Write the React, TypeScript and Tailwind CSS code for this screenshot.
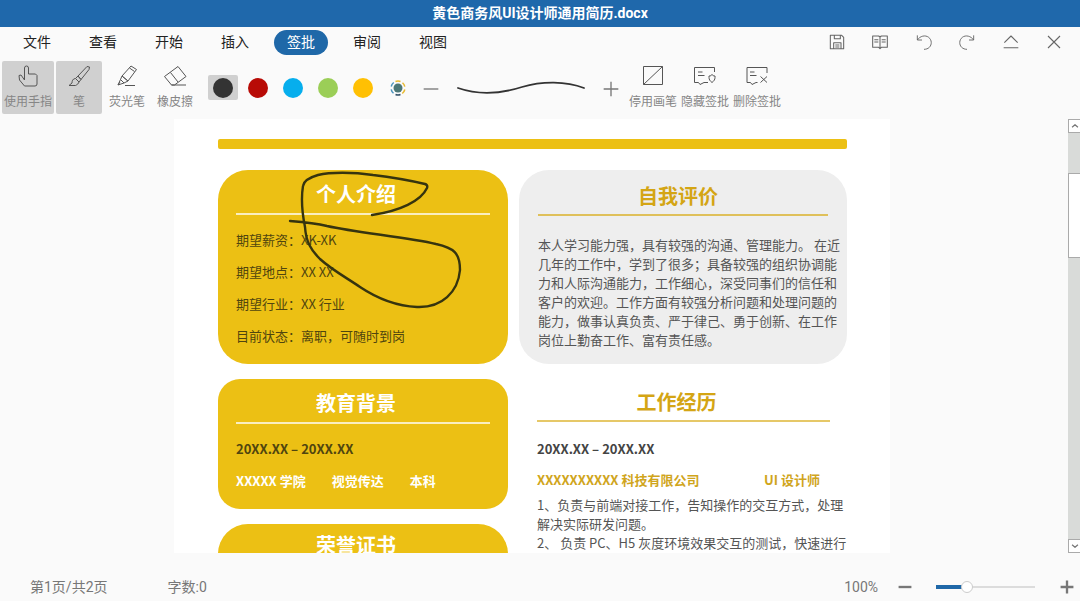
import { ReactNode, useState } from 'react'

const tabs = ['文件', '查看', '开始', '插入', '签批', '审阅', '视图']

const colors = [
  { name: '黑色', className: 'bg-[#333333]' },
  { name: '红色', className: 'bg-[#b80b06]' },
  { name: '蓝色', className: 'bg-[#06aeed]' },
  { name: '绿色', className: 'bg-[#9bce57]' },
  { name: '黄色', className: 'bg-[#ffc003]' },
]

interface IconProps {
  children: ReactNode
  className?: string
}

function Icon({ children, className = 'size-6' }: IconProps) {
  return (
    <svg viewBox="0 0 24 24" fill="none" stroke="currentColor" strokeLinejoin="round" className={className} aria-hidden="true">
      {children}
    </svg>
  )
}

interface ToolProps {
  label: string
  className?: string
  active?: boolean
  children: ReactNode
}

function Tool({ label, className = '', active = false, children }: ToolProps) {
  return (
    <button
      type="button"
      aria-pressed={active}
      className={`flex h-[53px] flex-col items-center gap-1 rounded-xs pt-[3px] text-xs text-[#868686] ${active ? 'bg-[#d0d0d0]' : ''} ${className}`}
    >
      <Icon className="size-6 text-[#555]">{children}</Icon>
      <span className="whitespace-nowrap leading-5">{label}</span>
    </button>
  )
}

function ActionButton({ label, children }: { label: string; children: ReactNode }) {
  return (
    <button type="button" aria-label={label} className="text-[#666]">
      <Icon className="size-4">{children}</Icon>
    </button>
  )
}

function MenuBar() {
  const [current, setCurrent] = useState('签批')

  return (
    <div className="flex h-[30px] items-center justify-between pl-[10px] pr-[18px]">
      <nav className="flex gap-3">
        {tabs.map((tab) => (
          <button
            key={tab}
            type="button"
            onClick={() => setCurrent(tab)}
            className={`h-[25px] rounded-full px-[13px] text-sm leading-none ${tab === current ? 'bg-[#1f68a8] text-white' : 'text-[#222]'}`}
          >
            {tab}
          </button>
        ))}
      </nav>
      <div className="flex w-[233px] justify-between">
        <ActionButton label="保存">
          <path strokeWidth="1.6" d="M2 2h17l3 3v17H2zM8 2v5h9V2M7 22v-9h11v9M9.500 16.500h6M9.500 19.500h6" />
        </ActionButton>
        <ActionButton label="阅读模式">
          <path strokeWidth="1.6" d="M1 3h9l2 1.500L14 3h9v17h-9l-2 2-2-2H1zM12 4v18M3.500 8.500h6M3.500 12h6M14.500 8.500h6M14.500 12h6" />
        </ActionButton>
        <ActionButton label="撤销">
          <path strokeWidth="1.400" d="M2 2v7h7M2 9c4-6 12-8 17-4 5 4 5 11 1 15-2 2-5 3-8 3" />
        </ActionButton>
        <ActionButton label="重做">
          <path strokeWidth="1.400" d="M22 2v7h-7M22 9C18 3 10 1 5 5 0 9 0 16 4 20c2 2 5 3 8 3" />
        </ActionButton>
        <ActionButton label="收起">
          <path strokeWidth="1.600" d="M2 13 12 3l10 10M1 20.500h22" />
        </ActionButton>
        <ActionButton label="关闭">
          <path strokeWidth="1.700" d="m3 3 18 18M21 3 3 21" />
        </ActionButton>
      </div>
    </div>
  )
}

function Toolbar() {
  const [color, setColor] = useState('黑色')

  return (
    <div className="flex h-[62px] items-start pl-[2px] pt-1">
      <Tool label="使用手指" className="w-[52px]" active>
        <path d="M8.500 16V4a2 2 0 0 1 4 0v6h7l1.500 1.500V20a2 2 0 0 1-2 2H8.500L3.500 16 3 11.500l2-.500 3.500 5" />
      </Tool>
      <Tool label="笔" className="ml-[2px] w-[46px]" active>
        <path d="m11 12 9-9.500 2.500.500-.500 2.500-8 10zM11 12l3 3.500-2 2.500-3.500-3.500zM8.500 14.500c-3 0-3.500 3-3.500 4.500L2 21.500h6.500c2-1 3-2 3.500-3.500" />
      </Tool>
      <Tool label="荧光笔" className="ml-[2px] w-[46px]">
        <path d="m7 12 9-10 5.500 3.500L13 17zM14.500 4l5 3.500M7 12l6 5-4 2-3.500-3.500zM5.500 15.500 3 21l6-2M3 21l2-3M10 21.500h10" />
      </Tool>
      <Tool label="橡皮擦" className="ml-[2px] w-[46px]">
        <path d="M1.500 12.500 15 2.500l8 10-11.500 8.500H8.500zM7.500 8.500 15 18M8.500 21H23" />
      </Tool>

      <div className="ml-[10px] flex gap-[5px] pt-[14px]">
        {colors.map((c) => (
          <button
            key={c.name}
            type="button"
            aria-label={c.name}
            onClick={() => setColor(c.name)}
            className={`flex h-[25px] w-[30px] items-center justify-center rounded-xs ${c.name === color ? 'bg-[#d0d0d0]' : ''}`}
          >
            <span className={`size-5 rounded-full ${c.className}`} />
          </button>
        ))}
        <button type="button" aria-label="更多颜色" className="flex h-[26px] w-[30px] items-center justify-center">
          <svg viewBox="0 0 16 16" fill="none" strokeWidth="1.500" className="size-4" aria-hidden="true">
            <circle cx="8" cy="8" r="4.500" fill="#4c7777" />
            <path stroke="#e8b92f" d="M5.500 1.500a7 7 0 0 1 5 0M12.500 2.700a7 7 0 0 1 2.300 4M14.800 9.500a7 7 0 0 1-2.500 4" />
            <path stroke="#35536b" d="M10.500 14.500a7 7 0 0 1-5 0" />
            <path stroke="#4a93bd" d="M3.500 13.300a7 7 0 0 1-2.300-4M1.200 6.500a7 7 0 0 1 2.500-4" />
          </svg>
        </button>
      </div>

      <div className="ml-[10px] flex items-center gap-[17px] pt-[19px] text-[#777]">
        <button type="button" aria-label="减小笔宽">
          <Icon className="size-4">
            <path strokeWidth="2" d="M1 12h22" />
          </Icon>
        </button>
        <svg viewBox="0 0 130 18" fill="none" stroke="#333" strokeLinecap="round" className="h-[18px] w-[130px]" aria-hidden="true">
          <path strokeWidth="1.800" d="M2 8c20 7 42 6 64-1 20-6 44-6 62 1" />
        </svg>
        <button type="button" aria-label="增大笔宽">
          <Icon className="size-4">
            <path strokeWidth="2" d="M1 12h22M12 1v22" />
          </Icon>
        </button>
      </div>

      <div className="ml-[10px] flex gap-1">
        <Tool label="停用画笔" className="w-12">
          <path d="M2.500 2.500h19v18h-19zM2.500 20.500l19-18" />
        </Tool>
        <Tool label="隐藏签批" className="w-12">
          <path d="M21.500 8V3.500h-20v15h4l1.500 2 4-2h4M5 8h4.500M5 11.500h6.500M19 18.500c-2-1.500-3-3-3-5V12c1.500 0 2.500-.500 3-1.500.500 1 1.500 1.500 3 1.500v1.500c0 2-1 3.500-3 5z" />
        </Tool>
        <Tool label="删除签批" className="w-12">
          <path d="M22 9V3.500H2v15h3.500l1.500 2 4-2h1.500M5 8h4.500M5 11.500h6.500M15.500 12.500l6.500 6M22 12.500l-6.500 6" />
        </Tool>
      </div>
    </div>
  )
}

interface SectionProps {
  title: string
  className: string
  headingClassName: string
  children?: ReactNode
}

function Section({ title, className, headingClassName, children }: SectionProps) {
  return (
    <section className={`relative ${className}`}>
      <h2 className={`text-center text-xl font-bold ${headingClassName}`}>{title}</h2>
      {children}
    </section>
  )
}

function InkStroke() {
  return (
    <svg viewBox="0 0 290 194" fill="none" stroke="#36340f" strokeLinecap="round" strokeLinejoin="round" className="pointer-events-none absolute left-0 top-0 h-[194px] w-[290px]" aria-hidden="true">
      <path
        strokeWidth="2.400"
        d="M154 45C182 41 203 31 209 18Q210 15 207 14C190 10 172 7 155 5C135 2 112 2 100 5Q86 9 85 16C83 28 84 42 87 57C88 72 93 80 102 89C114 100 129 108 142 117C157 127 177 136 199 137C224 138 240 122 242 100C242 83 236 78 218 74C190 67 140 63 109 56C97 53 85 52 72 51"
      />
    </svg>
  )
}

function Resume() {
  return (
    <article className="h-fit w-full max-w-[716px] bg-white pb-10 pl-11 pr-[43px] pt-5 text-[13px] text-[#555]">
      <div className="h-[10px] rounded-xs bg-[#ecc014]" />
      <div className="mt-[21px] grid grid-cols-[minmax(0,290fr)_minmax(0,328fr)] gap-x-[11px] gap-y-[15px]">
        <Section title="个人介绍" className="h-[194px] rounded-[30px] bg-[#ecc014] px-[18px] pt-[10px]" headingClassName="pr-[14px] border-b-2 border-[#faeec0] pb-[5px] text-white">
          <ul className="mt-[15px] flex flex-col gap-3 leading-5 text-[#50450f]">
            <li>期望薪资：XK-XK</li>
            <li>期望地点：XX XX</li>
            <li>期望行业：XX 行业</li>
            <li>目前状态：离职，可随时到岗</li>
          </ul>
          <InkStroke />
        </Section>

        <Section title="自我评价" className="h-[194px] rounded-[30px] bg-[#eeeeee] px-[19px] pt-[12px]" headingClassName="pr-[10px] border-b-2 border-[#dfc05a] pb-[4px] text-[#d4a514]">
          <p className="mt-[19px] whitespace-nowrap leading-[19px]">
            本人学习能力强，具有较强的沟通、管理能力。 在近
            <br />
            几年的工作中，学到了很多；具备较强的组织协调能
            <br />
            力和人际沟通能力，工作细心，深受同事们的信任和
            <br />
            客户的欢迎。工作方面有较强分析问题和处理问题的
            <br />
            能力，做事认真负责、严于律己、勇于创新、在工作
            <br />
            岗位上勤奋工作、富有责任感。
          </p>
        </Section>

        <div className="flex flex-col gap-[15px]">
          <Section title="教育背景" className="h-[130px] rounded-[22px] bg-[#ecc014] px-[18px] pt-[10px] font-bold" headingClassName="pr-[14px] border-b-2 border-[#faeec0] pb-[5px] text-white">
            <p className="mt-[15px] leading-5 text-[#50450f]">20XX.XX – 20XX.XX</p>
            <p className="mt-3 flex gap-[26px] leading-5 text-white">
              <span>XXXXX 学院</span>
              <span>视觉传达</span>
              <span>本科</span>
            </p>
          </Section>
          <Section title="荣誉证书" className="h-[130px] rounded-[30px] bg-[#ecc014] px-[18px] pt-[7px]" headingClassName="pr-[14px] border-b-2 border-[#faeec0] pb-[5px] text-white" />
        </div>

        <Section title="工作经历" className="pl-[18px] pr-[17px] pt-[9px]" headingClassName="pr-[14px] border-b-2 border-[#e6c868] pb-[4px] text-[#d4a514]">
          <p className="mt-[17px] font-bold leading-5 text-[#444]">20XX.XX – 20XX.XX</p>
          <p className="mt-[11px] flex justify-between pr-[10px] font-bold leading-5 text-[#d0a51c]">
            <span>XXXXXXXXXX 科技有限公司</span>
            <span>UI 设计师</span>
          </p>
          <p className="mt-[5px] whitespace-nowrap leading-[19px]">
            1、负责与前端对接工作，告知操作的交互方式，处理
            <br />
            解决实际研发问题。
            <br />
            2、 负责 PC、H5 灰度环境效果交互的测试，快速进行
          </p>
        </Section>
      </div>
    </article>
  )
}

function Scrollbar() {
  return (
    <div className="flex w-3 shrink-0 flex-col bg-[#d9dbd9] text-[#777]">
      <button type="button" aria-label="向上滚动" className="h-[14px] border border-r-0 border-[#aaa] bg-white">
        <Icon className="ml-px size-[10px]">
          <path strokeWidth="3" d="m5 15 7-6 7 6" />
        </Icon>
      </button>
      <div className="mt-10 h-[85px] border border-r-0 border-[#aaa] bg-white" />
      <button type="button" aria-label="向下滚动" className="mt-auto h-[14px] border border-r-0 border-[#aaa] bg-white">
        <Icon className="ml-px size-[10px]">
          <path strokeWidth="3" d="m5 9 7 6 7-6" />
        </Icon>
      </button>
    </div>
  )
}

function StatusBar() {
  return (
    <footer className="flex h-12 items-center justify-between pl-[30px] pr-[6px] pt-5 text-sm text-[#777]">
      <div className="flex gap-[60px]">
        <span>第1页/共2页</span>
        <span>字数:0</span>
      </div>
      <div className="flex items-center">
        <label htmlFor="zoom">100%</label>
        <button type="button" aria-label="缩小" className="ml-5">
          <Icon className="size-[14px]">
            <path strokeWidth="4" d="M1 12h22" />
          </Icon>
        </button>
        <input
          id="zoom"
          type="range"
          defaultValue={29}
          className="ml-6 h-4 w-[99px] appearance-none bg-transparent bg-[linear-gradient(#1f68a8,#1f68a8),linear-gradient(#dcdcdc,#dcdcdc)] bg-no-repeat [background-position:left_center] [background-size:30%_4px,100%_2px] [&::-webkit-slider-thumb]:size-3 [&::-webkit-slider-thumb]:appearance-none [&::-webkit-slider-thumb]:rounded-full [&::-webkit-slider-thumb]:border [&::-webkit-slider-thumb]:border-[#ccc] [&::-webkit-slider-thumb]:bg-white"
        />
        <button type="button" aria-label="放大" className="ml-[25px]">
          <Icon className="size-[14px]">
            <path strokeWidth="4" d="M1 12h22M12 1v22" />
          </Icon>
        </button>
      </div>
    </footer>
  )
}

export default function App() {
  return (
    <div className="flex h-screen flex-col bg-[#fafafa] font-[Roboto,'Noto_Sans_CJK_SC',sans-serif]">
      <header className="bg-[#1f68ab] text-center text-white">
        <h1 className="text-sm font-bold leading-[27px]">黄色商务风UI设计师通用简历.docx</h1>
      </header>
      <MenuBar />
      <Toolbar />
      <main className="flex min-h-0 flex-1">
        <div className="flex min-w-0 flex-1 justify-center overflow-hidden pr-1 font-['Noto_Sans_CJK_SC',sans-serif]">
          <Resume />
        </div>
        <Scrollbar />
      </main>
      <StatusBar />
    </div>
  )
}
